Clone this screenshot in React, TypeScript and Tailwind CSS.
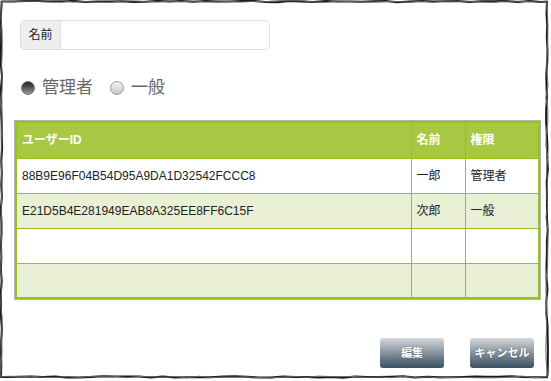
import React from "react";

function seeded(seed: number) {
  let s = seed;
  return () => {
    s = (s * 9301 + 49297) % 233280;
    return s / 233280;
  };
}

function sketchPath(seed: number, amp: number) {
  const r = seeded(seed);
  const x0 = 1.5, y0 = 1.5, x1 = 547, y1 = 377;
  const pts: [number, number][] = [];
  const step = 12;
  for (let x = x0; x < x1; x += step) pts.push([x, y0 + (r() - 0.5) * amp]);
  for (let y = y0; y < y1; y += step) pts.push([x1 + (r() - 0.5) * amp * 1.4, y]);
  for (let x = x1; x > x0; x -= step) pts.push([x, y1 + (r() - 0.5) * amp]);
  for (let y = y1; y > y0; y -= step) pts.push([x0 + (r() - 0.5) * amp, y]);
  return "M" + pts.map((p) => p[0].toFixed(1) + " " + p[1].toFixed(1)).join(" L") + " Z";
}

const rows = [
  { id: "88B9E96F04B54D95A9DA1D32542FCCC8", name: "一郎", role: "管理者" },
  { id: "E21D5B4E281949EAB8A325EE8FF6C15F", name: "次郎", role: "一般" },
  { id: "", name: "", role: "" },
  { id: "", name: "", role: "" },
];

export default function App() {
  return (
    <div
      className="relative w-[551px] h-[381px] bg-white overflow-hidden"
      style={{ fontFamily: '"Liberation Sans", Arial, "Noto Sans CJK JP", sans-serif' }}
    >
      <div className="flex flex-col pt-5">
        <div className="ml-5 flex h-[30px] w-[250px] rounded-[5px] border border-[#dddddd] overflow-hidden">
          <div className="flex w-[40px] items-center justify-center border-r border-[#dddddd] bg-[#eeeeee] text-[12px] text-[#222]">
            名前
          </div>
          <div className="flex-1 bg-white" />
        </div>

        <div className="ml-[21px] mt-[26px] flex h-6 items-center text-[17px] text-[#666]">
          <span className="h-[14px] w-[14px] rounded-full bg-gradient-to-b from-[#222] to-[#9a9a9a] border border-[#777]" />
          <span className="ml-[7px]">管理者</span>
          <span className="ml-[17px] h-[14px] w-[14px] rounded-full bg-gradient-to-b from-[#f4f4f4] to-[#c8c8c8] border border-[#9a9a9a]" />
          <span className="ml-[7px]">一般</span>
        </div>

        <div className="ml-[14px] mt-5 w-[527px] border border-[#b4b4b4]">
          <table className="w-full border-collapse border-2 border-[#96c11f] text-[12px]">
            <thead>
              <tr className="h-[36px] bg-[#a8c843] text-left text-white font-bold">
                <th className="w-[395px] border border-[#96c11f] px-[5px] font-bold">ユーザーID</th>
                <th className="w-[54px] border border-[#96c11f] px-[5px] font-bold">名前</th>
                <th className="border border-[#96c11f] px-[5px] font-bold">権限</th>
              </tr>
            </thead>
            <tbody>
              {rows.map((r, i) => (
                <tr key={i} className={i % 2 === 0 ? "h-[35px] bg-white" : "h-[35px] bg-[#e9f0d6]"}>
                  <td className="border border-[#96c11f] px-[5px] text-[#222]">{r.id}</td>
                  <td className="border border-[#96c11f] px-[5px] text-[#222]">{r.name}</td>
                  <td className="border border-[#96c11f] px-[5px] text-[#222]">{r.role}</td>
                </tr>
              ))}
            </tbody>
          </table>
        </div>

        <div className="mt-[38px] mr-[17px] flex justify-end gap-[26px]">
          <button className="h-[30px] w-[64px] rounded-[3px] bg-gradient-to-b from-[#d6d9dc] to-[#3a5161] text-[11px] font-bold text-white [text-shadow:0_0_2px_rgba(0,0,0,0.4)]">
            編集
          </button>
          <button className="h-[30px] w-[64px] rounded-[3px] bg-gradient-to-b from-[#d6d9dc] to-[#3a5161] text-[11px] font-bold text-white [text-shadow:0_0_2px_rgba(0,0,0,0.4)]">
            キャンセル
          </button>
        </div>
      </div>

      <svg className="pointer-events-none absolute inset-0" width="551" height="381" viewBox="0 0 551 381">
        <path d={sketchPath(7, 1.4)} fill="none" stroke="#1a1a1a" strokeWidth="2" strokeLinejoin="round" />
        <path d={sketchPath(31, 1.8)} fill="none" stroke="#666" strokeWidth="1" strokeLinejoin="round" />
      </svg>
    </div>
  );
}
